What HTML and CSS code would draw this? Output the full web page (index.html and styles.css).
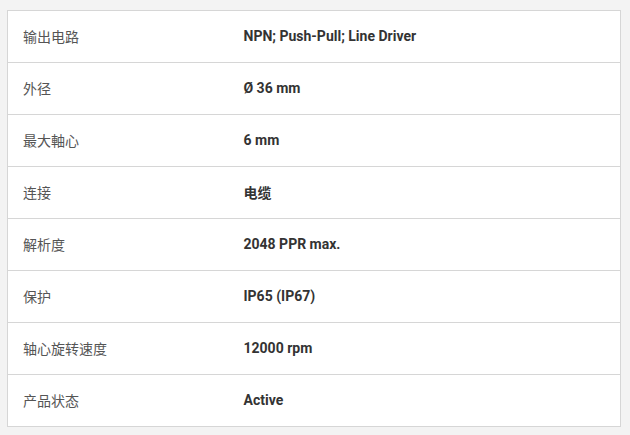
FILE: index.html
```html
<!DOCTYPE html>
<html lang="zh">
<head>
<meta charset="utf-8">
<link rel="stylesheet" href="styles.css">
</head>
<body>
<div class="page">
  <table class="specs">
    <tbody>
      <tr><td class="label">输出电路</td><td class="value">NPN; Push-Pull; Line Driver</td></tr>
      <tr><td class="label">外径</td><td class="value">Ø 36 mm</td></tr>
      <tr><td class="label">最大軸心</td><td class="value">6 mm</td></tr>
      <tr><td class="label">连接</td><td class="value">电缆</td></tr>
      <tr><td class="label">解析度</td><td class="value">2048 PPR max.</td></tr>
      <tr><td class="label">保护</td><td class="value">IP65 (IP67)</td></tr>
      <tr><td class="label">轴心旋转速度</td><td class="value">12000 rpm</td></tr>
      <tr><td class="label">产品状态</td><td class="value">Active</td></tr>
    </tbody>
  </table>
</div>
</body>
</html>
```
FILE: styles.css
```css
html, body {
  margin: 0;
  padding: 0;
  background: #f3f3f3;
}
.page {
  padding: 10px 9px 0 7px;
}
.specs {
  width: 614px;
  border-collapse: collapse;
  background: #fff;
  border: 1px solid #d6d6d6;
  font-family: Roboto, "Noto Sans CJK SC", sans-serif;
  font-size: 14px;
}
.specs td {
  height: 52px;
  box-sizing: border-box;
  padding: 0 0 2px 15px;
  border-bottom: 1px solid #d6d6d6;
  vertical-align: middle;
}
.specs td.label {
  width: 221px;
  color: #555;
}
.specs td.value {
  color: #333;
  font-weight: 700;
}
```
